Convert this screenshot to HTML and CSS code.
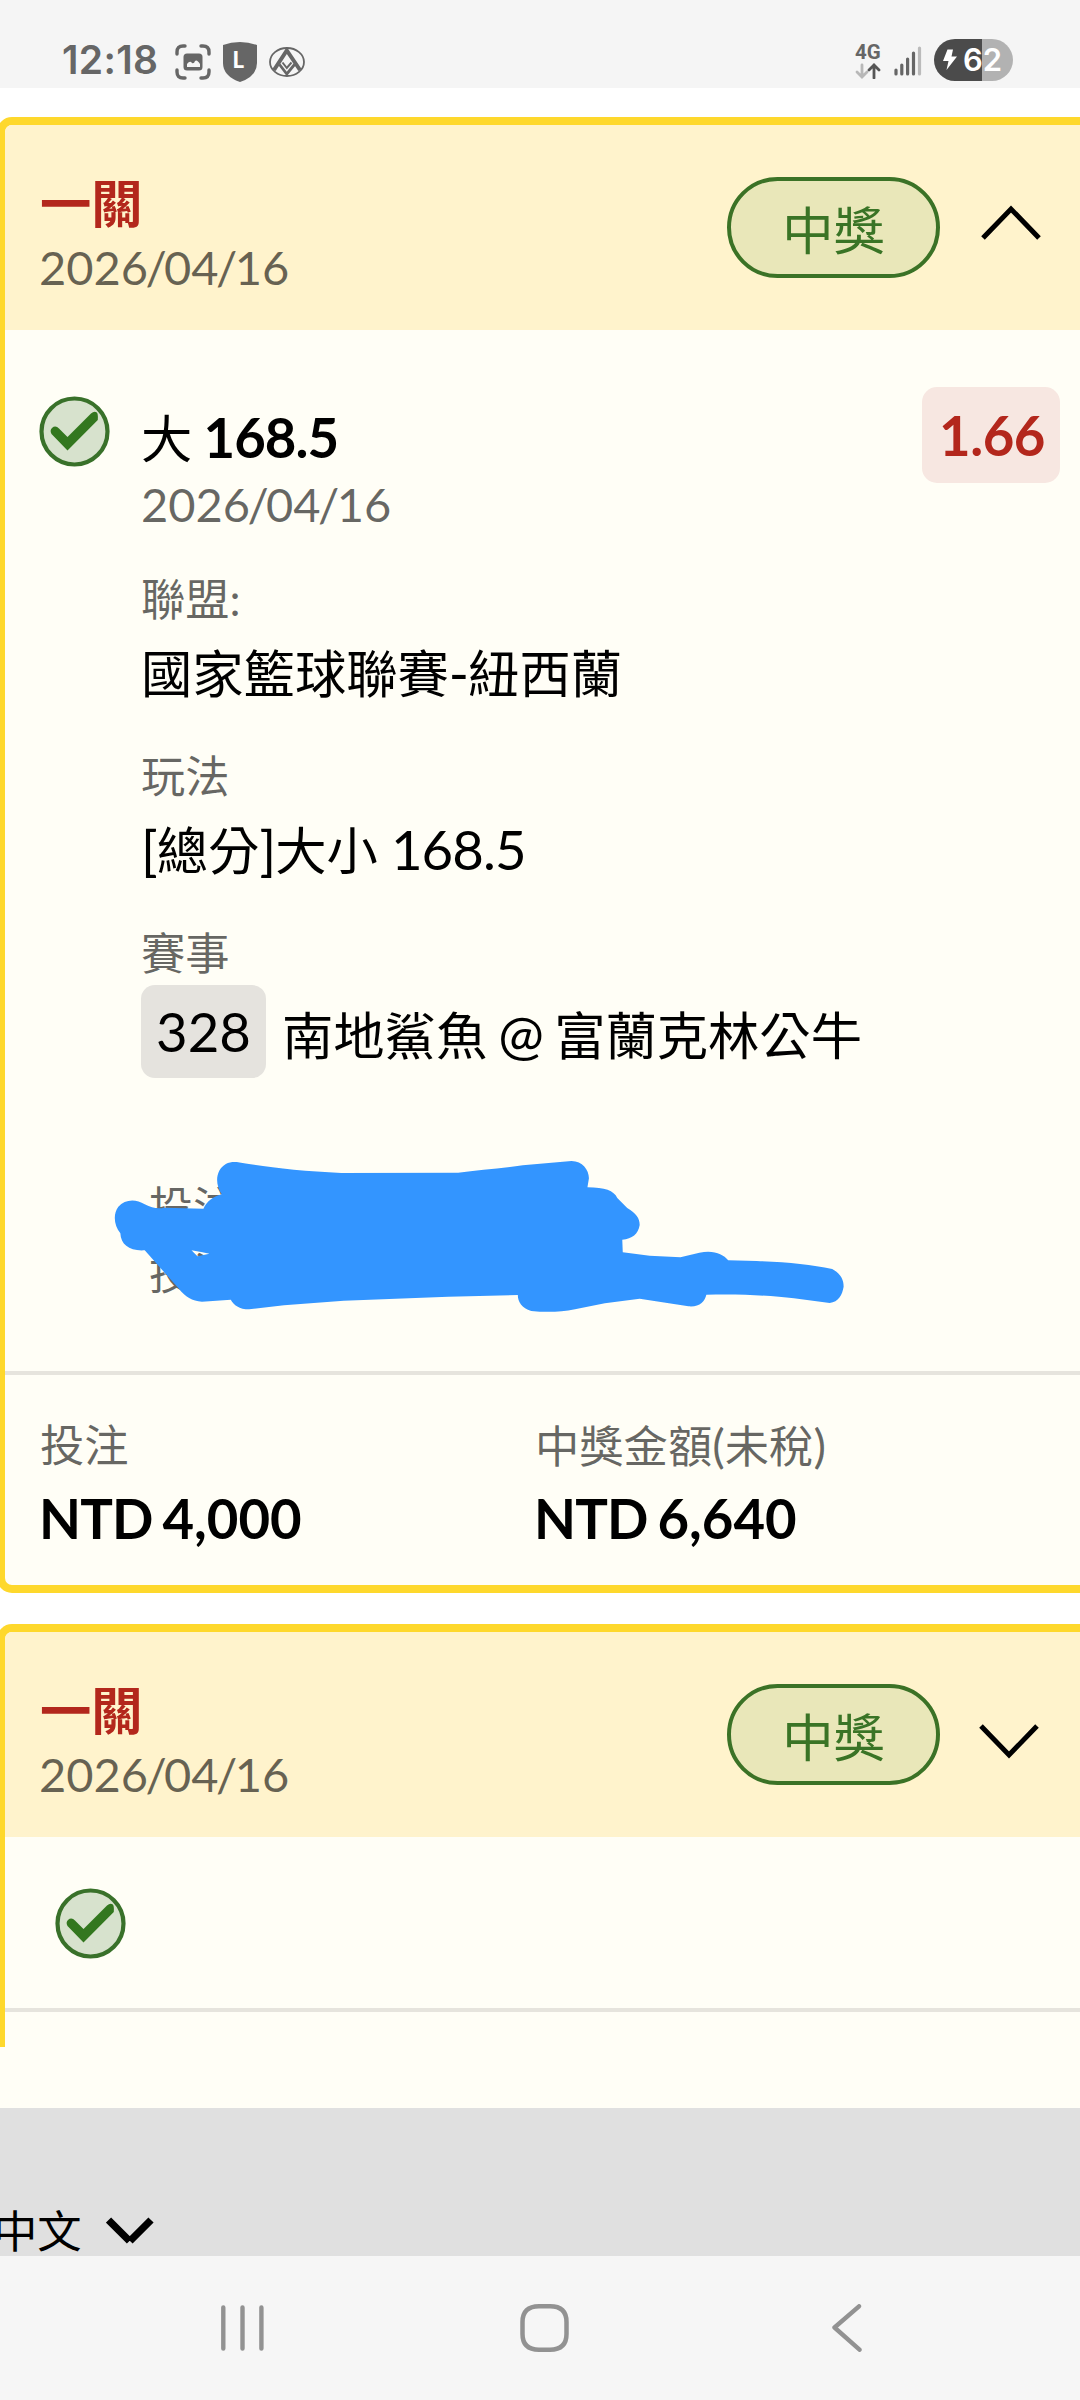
FILE: index.html
```html
<!DOCTYPE html>
<html lang="zh-Hant">
<head>
<meta charset="utf-8">
<title>投注紀錄</title>
<link rel="stylesheet" href="styles.css">
</head>
<body>
<header class="status">
  <span class="clock">12:18</span>
  <svg class="ic-capture" width="36" height="36" viewBox="0 0 36 36"><g fill="none" stroke="#666" stroke-width="3.4" stroke-linecap="round"><path d="M2 10V8q0-6 6-6h2M26 2h2q6 0 6 6v2M34 26v2q0 6-6 6h-2M10 34H8q-6 0-6-6v-2"/></g><rect x="8.500" y="9.500" width="19" height="17" rx="3.500" fill="#666"/><path d="M12 23v-3q3-4 5-1q2 1 3-2q2-2 5 3v3z" fill="#f5f5f5"/></svg>
  <svg class="ic-shield" width="34" height="40" viewBox="0 0 34 40"><path d="M17 0Q26 0 34 3V21Q34 34 17 40Q0 34 0 21V3Q8 0 17 0Z" fill="#666"/><text class="shield-letter" x="9.500" y="25.500">L</text></svg>
  <svg class="ic-metro" width="36" height="30" viewBox="0 0 36 30"><g fill="none" stroke="#666"><ellipse cx="18" cy="15" rx="17" ry="14" stroke-width="1.800"/><path d="M5 23L17.800 3.500L31 23" stroke-width="4"/><path d="M10.500 17.500L17.800 27L25.500 17.500" stroke-width="2.800"/><path d="M13.500 15.500L17.800 21L22.500 15.500" stroke-width="2"/></g></svg>
  <div class="net"><span class="net-type">4G</span>
    <svg width="26" height="16" viewBox="0 0 26 16" fill="none" stroke-width="2.800" stroke-linecap="round"><path d="M7 2v11M2 9l5 5 5-5" stroke="#b8b8b8"/><path d="M19 15V2M14 7l5-5 5 5" stroke="#555"/></svg>
  </div>
  <svg class="ic-signal" width="28" height="31" viewBox="0 0 28 31" stroke="#666" stroke-width="3.200" stroke-linecap="round"><path d="M2 24v4M7.800 19v9M13.600 13v15M19.500 7v21"/><path d="M25.500 2v26" stroke="#bbb"/></svg>
  <div class="battery">
    <svg width="16" height="24" viewBox="0 0 16 24"><path d="M5.500 1.500H11L9.500 8.500H15L4.500 22L6.500 13H1Z" fill="#fff"/></svg>
    <span>62</span>
  </div>
</header>

<main class="page">
  <section class="card">
    <div class="card-head">
      <div class="head-text">
        <h2>一關</h2>
        <p class="date">2026<i>/</i>04<i>/</i>16</p>
      </div>
      <span class="badge">中獎</span>
      <svg class="chev up" width="60" height="35" viewBox="0 0 60 35"><path d="M2 33L30 4L58 33" fill="none" stroke="#000" stroke-width="5"/></svg>
    </div>
    <div class="card-body">
      <svg class="check" width="71" height="71" viewBox="0 0 71 71"><circle cx="35.500" cy="35.500" r="33" fill="#d7e2cd" stroke="#39712a" stroke-width="4.200"/><path d="M12.500 38q-2-3.500.5-6q3.500-3 7 .5L28.500 41L52 17.500q3-2.500 5.500-1.200q1.800 1 1.300 7.700L28.500 54.500Z" fill="#33771f"/></svg>
      <div class="detail">
        <p class="value">大 <b class="latin">168.5</b></p>
        <p class="date body-date">2026<i>/</i>04<i>/</i>16</p>
        <p class="label">聯盟:</p>
        <p class="value">國家籃球聯賽<span class="latin">-</span>紐西蘭</p>
        <p class="label">玩法</p>
        <p class="value"><span class="latin">[</span>總分<span class="latin">]</span>大小 <span class="latin">168.5</span></p>
        <p class="label">賽事</p>
        <div class="match"><span class="match-no">328</span><span class="match-name">南地鯊魚 <span class="latin">@</span> 富蘭克林公牛</span></div>
        <div class="notes">
          <p>投注</p>
          <p>投注</p>
          <svg class="scribble" width="780" height="200" viewBox="0 0 1568 600" preserveAspectRatio="none"><path fill="#3395ff" fill-rule="evenodd" d="M295 66C340 78 420 94 505 99L740 98C780 90 830 84 870 76L968 63C990 63 1003 90 1003 115L1000 142C1035 142 1053 152 1060 174L1080 204C1098 220 1105 235 1105 255C1102 282 1090 297 1070 299L1071 337L1125 347L1187 352L1225 338C1255 330 1272 342 1283 361L1340 363C1400 366 1450 373 1492 387C1510 402 1515 420 1515 440C1512 465 1505 485 1487 489L1415 475C1370 467 1310 461 1239 464C1236 485 1225 502 1203 499L1105 476L1035 490L975 508C945 517 915 517 887 513C868 505 860 485 860 465L720 470L510 482L390 496L320 508C300 508 289 495 283 479L225 485C205 483 192 472 178 445L110 331C80 334 62 315 61 280C48 255 46 222 57 200C70 178 92 176 110 193C125 204 135 207 150 203L228 206C235 185 246 170 265 163C250 130 253 90 273 72C280 66 288 65 295 66ZM204 331L216 349L240 341L226 337Z"/></svg>
        </div>
      </div>
      <span class="odds">1.66</span>
    </div>
    <div class="card-foot">
      <div><p class="label">投注</p><p class="amount"><span class="cur">NTD</span> 4,000</p></div>
      <div><p class="label">中獎金額<span class="latin">(</span>未稅<span class="latin">)</span></p><p class="amount"><span class="cur">NTD</span> 6,640</p></div>
    </div>
  </section>

  <section class="card folded">
    <div class="card-head">
      <div class="head-text">
        <h2>一關</h2>
        <p class="date">2026<i>/</i>04<i>/</i>16</p>
      </div>
      <span class="badge">中獎</span>
      <svg class="chev down" width="60" height="35" viewBox="0 0 60 35"><path d="M2 2L30 31L58 2" fill="none" stroke="#000" stroke-width="5"/></svg>
    </div>
    <div class="folded-body">
      <svg class="check" width="71" height="71" viewBox="0 0 71 71"><circle cx="35.500" cy="35.500" r="33" fill="#d7e2cd" stroke="#39712a" stroke-width="4.200"/><path d="M12.500 38q-2-3.500.5-6q3.500-3 7 .5L28.500 41L52 17.500q3-2.500 5.500-1.200q1.800 1 1.300 7.700L28.500 54.500Z" fill="#33771f"/></svg>
    </div>
    <div class="folded-foot"></div>
  </section>
  <div class="spacer"></div>
  <footer class="lang"><span>中文</span><svg width="48" height="27" viewBox="0 0 48 27"><path d="M2.500 3L23.500 24M45 3L24 24" fill="none" stroke="#000" stroke-width="7.400"/></svg></footer>
</main>

<nav class="navbar">
  <svg width="43" height="46" viewBox="0 0 43 46"><path d="M2.300 2.500v41M21.500 2.500v41M40.400 2.500v41" stroke="#929292" stroke-width="4.400" stroke-linecap="round"/></svg>
  <svg class="home" width="49" height="48" viewBox="0 0 49 48"><path d="M24.500 2.300H30Q46.500 2.300 46.500 18V30Q46.500 45.700 30 45.700H19Q2.500 45.700 2.500 30V18Q2.500 2.300 19 2.300Z" fill="none" stroke="#929292" stroke-width="4.500"/></svg>
  <svg width="30" height="48" viewBox="0 0 30 48"><path d="M27 2.300L2.500 23.500L27.500 45.700" fill="none" stroke="#929292" stroke-width="4.400" stroke-linecap="round" stroke-linejoin="round"/></svg>
</nav>
</body>
</html>
```
FILE: styles.css
```css
* { box-sizing: border-box; }
body {
  margin: 0;
  width: 1080px;
  height: 2400px;
  overflow: hidden;
  background: #fff;
  color: #000;
  font-family: Lato, "Noto Sans CJK TC", sans-serif;
  font-size: 51.300px;
}
p, h2 { margin: 0; white-space: nowrap; }
svg { display: block; flex: none; }

/* status bar */
.status {
  display: flex;
  align-items: flex-start;
  height: 88px;
  padding-left: 62px;
  background: #f5f5f5;
  color: #666;
}
.clock {
  width: 113px;
  margin-top: 36px;
  font: 600 39px/48px Inter, sans-serif;
  letter-spacing: 0.300px;
}
.ic-capture { margin-top: 44px; }
.ic-shield { margin: 42px 0 0 12px; }
.shield-letter { font: 900 22px Lato, sans-serif; fill: #fff; }
.ic-metro { margin: 47px 0 0 12px; }
.net { width: 27px; margin: 43px 0 0 550px; }
.net-type { display: block; font: 700 20.500px/19px Roboto, sans-serif; }
.net svg { margin-top: 1px; }
.ic-signal { margin: 46px 0 0 12px; }
.battery {
  display: flex;
  align-items: center;
  width: 79px;
  height: 42px;
  margin: 39px 0 0 12px;
  padding-left: 8px;
  gap: 5px;
  border-radius: 21px;
  background: linear-gradient(90deg, #4b4b4b 48px, #b2b2b2 48px);
  color: #fff;
  font: 600 31px/42px Inter, sans-serif;
}

/* slips */
.page { height: 2168px; padding-top: 29px; }
.card {
  width: 1110px;
  margin-left: -3px;
  border: 8px solid #fed82c;
  border-radius: 15px;
  background: #fffef6;
  overflow: hidden;
}
.card-head {
  display: flex;
  align-items: flex-start;
  height: 205px;
  padding: 0 58px 0 35px;
  background: #fff3cc;
}
.head-text { flex: 1; padding-top: 45px; }
h2 { color: #b3271c; font-size: 51.300px; font-weight: 700; line-height: 66px; }
.date { font-size: 47px; line-height: 60px; color: rgba(0, 0, 0, 0.6); }
/* tightened date separators */
.date i { font-style: normal; margin: 0 -2.600px; }
.head-text .date { margin: 1px 0 0 -1px; }
.badge {
  width: 213px;
  height: 101px;
  margin-top: 52px;
  padding-top: 3px;
  border: 4px solid #3b7226;
  border-radius: 51px;
  background: #e9e7b9;
  color: #3a7426;
  line-height: 92px;
  text-align: center;
}
.chev { margin-left: 41px; }
.chev.up { margin-top: 80px; }
.chev.down { margin-top: 92px; margin-left: 39px; margin-right: 2px; }

.card-body {
  display: flex;
  align-items: flex-start;
  height: 1041px;
  padding: 0 39px 0 34px;
}
.card-body .check { margin-top: 66px; }
.detail { flex: 1; padding: 74px 0 0 31px; }
.value { height: 66px; line-height: 66px; margin-top: 10px; }
.value:first-child { margin-top: 0; word-spacing: -2px; }
.value .latin, .match-name .latin { font-size: 54.500px; letter-spacing: -0.900px; }
.label { height: 60px; font-size: 44.300px; line-height: 60px; color: rgba(0, 0, 0, 0.6); }
.label .latin { font-size: 47px; }
.detail .label { margin-top: 41px; }
.detail .body-date { margin-top: 4px; }
.detail .body-date + .label { margin-top: 35px; }
.match { display: flex; margin-top: 2px; line-height: 93px; white-space: nowrap; }
.match-no {
  width: 125px;
  height: 93px;
  border-radius: 14px;
  background: #e5e3de;
  font-size: 54.500px;
  text-align: center;
}
.match-name { height: 93px; padding-top: 3px; margin-left: 16px; word-spacing: -2px; }
.notes { position: relative; margin: 96px 0 0 8px; font-size: 44px; line-height: 66px; color: rgba(0, 0, 0, 0.6); }
.scribble { position: absolute; left: -59px; top: -34px; }
.odds {
  width: 138px;
  height: 96px;
  margin-top: 57px;
  padding-left: 2px;
  border-radius: 15px;
  background: #f7e7e1;
  color: #b3271c;
  font-size: 54.500px;
  font-weight: 700;
  letter-spacing: -0.500px;
  line-height: 96px;
  text-align: center;
}
.card-foot {
  display: grid;
  grid-template-columns: 495px 1fr;
  height: 214px;
  padding: 40px 0 0 35px;
  border-top: 4px solid #e6e4dd;
}
.amount { margin: 10px 0 0 -1px; font-size: 54.500px; font-weight: 700; line-height: 66px; word-spacing: -3.500px; }
.cur { letter-spacing: -0.800px; }

.folded {
  margin-top: 31px;
  border-bottom: 0;
  border-radius: 15px 0 0 0;
}
.folded-body { height: 171px; padding: 51px 0 0 50px; }
.folded-foot { height: 39px; border-top: 4px solid #e6e4dd; }
.spacer { height: 61px; background: #fffef6; }
.lang {
  display: flex;
  align-items: flex-start;
  height: 148px;
  background: #e0e0e0;
  font-size: 44.300px;
  line-height: 60px;
}
.lang span { width: 113px; margin: 93px 0 0 -7px; }
.lang svg { margin-top: 109px; }

/* system navigation */
.navbar {
  display: flex;
  align-items: flex-start;
  justify-content: space-between;
  height: 144px;
  padding: 48px 218px 0 221px;
  background: #f6f6f6;
}
.navbar svg:first-child { margin-top: 1px; }
.navbar .home { margin-left: -4px; margin-right: 4px; }
```
